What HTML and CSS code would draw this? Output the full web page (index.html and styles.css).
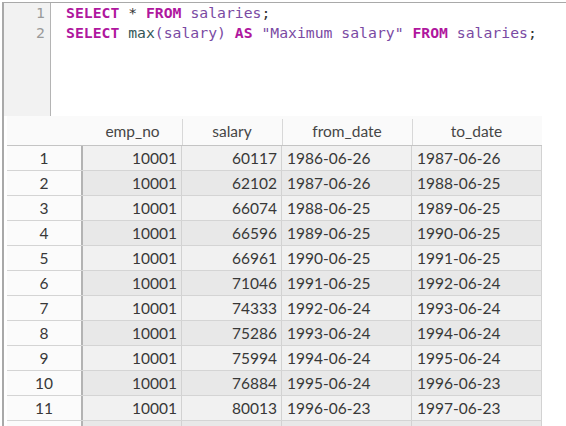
FILE: index.html
```html
<!DOCTYPE html>
<html>
<head>
<meta charset="utf-8">
<link rel="stylesheet" href="styles.css">
</head>
<body>
<div class="app">
  <div class="marker"></div>
  <div class="editor">
    <div class="gutter">
      <div class="ln">1</div>
      <div class="ln">2</div>
    </div>
    <div class="code">
      <div class="line"><span class="kw">SELECT</span> <span class="p">*</span> <span class="kw">FROM</span> <span class="id">salaries</span><span class="p">;</span></div>
      <div class="line"><span class="kw">SELECT</span> <span class="fn">max</span><span class="id">(salary)</span> <span class="kw">AS</span> <span class="str">"Maximum salary"</span> <span class="kw">FROM</span> <span class="id">salaries</span><span class="p">;</span></div>
    </div>
  </div>
  <div class="grid">
    <div class="hrow">
      <div class="hc rn"></div>
      <div class="hc c1">emp_no</div>
      <div class="hc c2">salary</div>
      <div class="hc c3">from_date</div>
      <div class="hc c4">to_date</div>
    </div>
    <div class="row odd"><div class="rn">1</div><div class="c1 num">10001</div><div class="c2 num">60117</div><div class="c3">1986-06-26</div><div class="c4">1987-06-26</div></div>
    <div class="row even"><div class="rn">2</div><div class="c1 num">10001</div><div class="c2 num">62102</div><div class="c3">1987-06-26</div><div class="c4">1988-06-25</div></div>
    <div class="row odd"><div class="rn">3</div><div class="c1 num">10001</div><div class="c2 num">66074</div><div class="c3">1988-06-25</div><div class="c4">1989-06-25</div></div>
    <div class="row even"><div class="rn">4</div><div class="c1 num">10001</div><div class="c2 num">66596</div><div class="c3">1989-06-25</div><div class="c4">1990-06-25</div></div>
    <div class="row odd"><div class="rn">5</div><div class="c1 num">10001</div><div class="c2 num">66961</div><div class="c3">1990-06-25</div><div class="c4">1991-06-25</div></div>
    <div class="row even"><div class="rn">6</div><div class="c1 num">10001</div><div class="c2 num">71046</div><div class="c3">1991-06-25</div><div class="c4">1992-06-24</div></div>
    <div class="row odd"><div class="rn">7</div><div class="c1 num">10001</div><div class="c2 num">74333</div><div class="c3">1992-06-24</div><div class="c4">1993-06-24</div></div>
    <div class="row even"><div class="rn">8</div><div class="c1 num">10001</div><div class="c2 num">75286</div><div class="c3">1993-06-24</div><div class="c4">1994-06-24</div></div>
    <div class="row odd"><div class="rn">9</div><div class="c1 num">10001</div><div class="c2 num">75994</div><div class="c3">1994-06-24</div><div class="c4">1995-06-24</div></div>
    <div class="row even"><div class="rn">10</div><div class="c1 num">10001</div><div class="c2 num">76884</div><div class="c3">1995-06-24</div><div class="c4">1996-06-23</div></div>
    <div class="row odd"><div class="rn">11</div><div class="c1 num">10001</div><div class="c2 num">80013</div><div class="c3">1996-06-23</div><div class="c4">1997-06-23</div></div>
    <div class="row even"><div class="rn"></div><div class="c1 num"></div><div class="c2 num"></div><div class="c3"></div><div class="c4"></div></div>
  </div>
</div>
</body>
</html>
```

FILE: styles.css
```css
html, body {
  margin: 0;
  padding: 0;
  background: #ffffff;
  overflow: hidden;
  width: 566px;
  height: 426px;
}
.app {
  position: relative;
  margin: 2px 0 0 2px;
  border-top: 1px solid #a9a9a9;
  border-left: 2px solid #a9a9a9;
  height: 423px;
  overflow: hidden;
}
.marker {
  position: absolute;
  left: -4px;
  top: 301px;
  width: 3px;
  height: 17px;
  background: #b39be6;
}
.editor {
  display: flex;
  height: 113px;
}
.gutter {
  width: 41px;
  padding-right: 5px;
  background: #f2f2f2;
  border-right: 1px solid #b4b4b4;
}
.ln {
  font-family: "DejaVu Sans Mono", monospace;
  font-size: 14.75px;
  line-height: 20px;
  text-align: right;
  color: #9a9a9a;
}
.code {
  padding-left: 15px;
  font-family: "DejaVu Sans Mono", monospace;
  font-size: 14.75px;
  line-height: 20px;
}
.line { white-space: pre; height: 20px; }
.kw { color: #b0179e; font-weight: bold; }
.id { color: #7a4aa3; }
.str { color: #7a4aa3; }
.fn { color: #355757; }
.p { color: #333333; }

.grid {
  padding-left: 3px;
  font-family: Lato, sans-serif;
  font-size: 15.5px;
  color: #383838;
}
.hrow {
  display: flex;
  height: 29px;
  border-bottom: 1px solid #c4c4c4;
  width: 535px;
  background: #fafafa;
}
.hc {
  display: flex;
  align-items: center;
  justify-content: center;
  color: #464646;
  box-sizing: border-box;
  position: relative;
}
.hrow .rn { border-right: 2px solid transparent; }
.hrow .c1::after, .hrow .c2::after, .hrow .c3::after {
  content: "";
  position: absolute;
  right: -1px;
  top: 3px;
  bottom: 0;
  width: 1px;
  background: #d8d8d8;
}
.hrow .c4 { border-right: 1px solid transparent; }
.row {
  display: flex;
  height: 24px;
  border-bottom: 1px solid #d4d4d4;
  width: 535px;
}
.row > div {
  display: flex;
  align-items: center;
  box-sizing: border-box;
  line-height: 24px;
}
.rn {
  width: 76px;
  justify-content: center;
  border-right: 2px solid #b3b3b3;
}
.row .rn { background: #fbfbfb; }
.c1 { width: 99px; }
.c2 { width: 100px; }
.c3 { width: 130px; }
.c4 { width: 130px; }
.row .c1, .row .c2, .row .c3, .row .c4 { border-right: 1px solid #d2d2d2; }
.num { justify-content: flex-end; padding-right: 4px; }
.row .c3, .row .c4 { padding-left: 5px; }
.odd .c1, .odd .c2, .odd .c3, .odd .c4 { background: #f1f1f1; }
.even .c1, .even .c2, .even .c3, .even .c4 { background: #e8e8e8; }
```
